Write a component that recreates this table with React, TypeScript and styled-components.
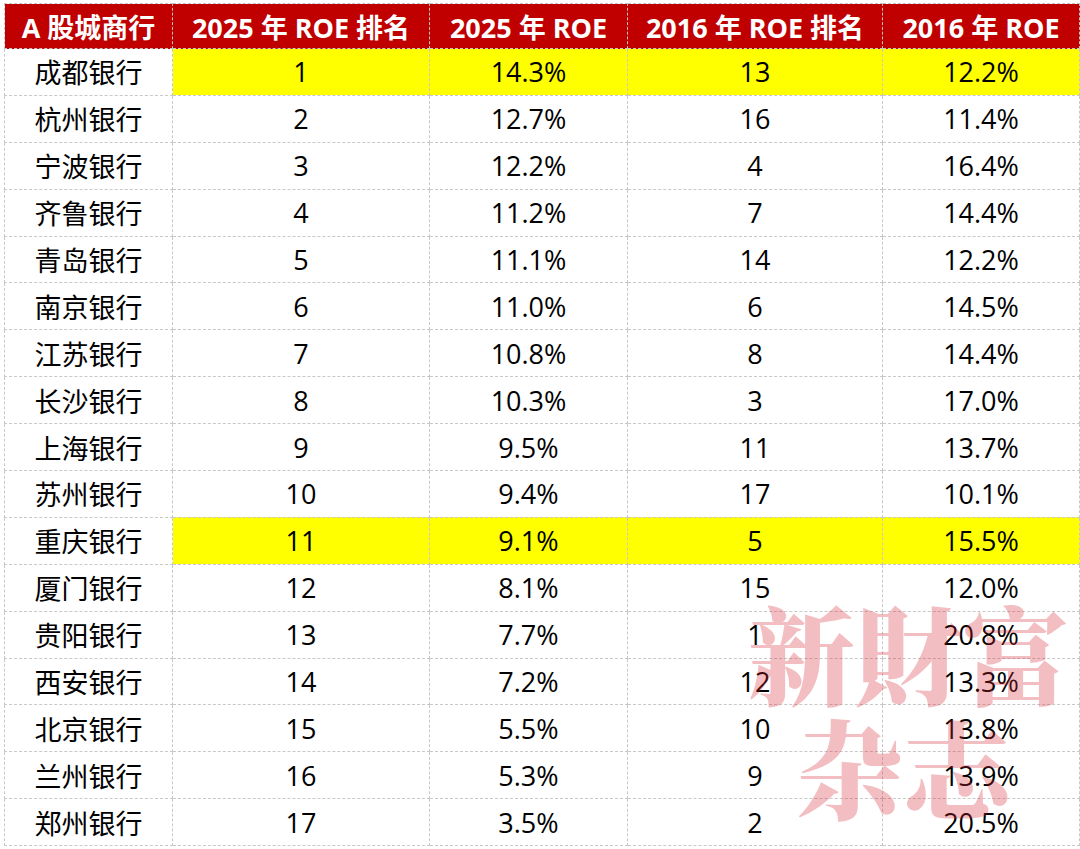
import React from "react";
import styled, { createGlobalStyle } from "styled-components";

const Global = createGlobalStyle`
  html, body { margin: 0; padding: 0; background: #ffffff; }
  body { font-family: "Open Sans", "Noto Sans CJK SC", sans-serif; }
`;

const Page = styled.div`
  position: relative;
  width: 1080px;
  height: 849px;
  padding: 3px 0 0 4px;
  box-sizing: border-box;
  overflow: hidden;
`;

const Table = styled.table`
  border-collapse: collapse;
  table-layout: fixed;
  width: 1075px;
  font-family: "Open Sans", "Noto Sans CJK SC", sans-serif;
`;

const HeadCell = styled.th<{ $w: number }>`
  width: ${(p) => p.$w}px;
  height: 44px;
  padding: 0;
  background: #c00000;
  color: #ffffff;
  font-size: 27px;
  font-weight: 700;
  text-align: center;
  vertical-align: middle;
  border: 1px dashed #c4c4c4;
  white-space: nowrap;
`;

const Cell = styled.td<{ $hl?: boolean }>`
  height: 45.9px;
  padding: 0;
  background: ${(p) => (p.$hl ? "#ffff00" : "#ffffff")};
  color: #000000;
  font-size: 27px;
  font-weight: 400;
  text-align: center;
  vertical-align: middle;
  border: 1px dashed #c8c8c8;
  white-space: nowrap;
`;

const Watermark = styled.div`
  position: absolute;
  left: 748px;
  top: 594px;
  width: 320px;
  font-family: "Noto Serif CJK SC", "Noto Sans CJK SC", serif;
  font-weight: 900;
  font-size: 107px;
  line-height: 114px;
  color: rgba(214, 40, 52, 0.3);
  text-align: center;
  pointer-events: none;
`;

const WmLine = styled.div<{ $shift?: number }>`
  white-space: nowrap;
  margin-left: ${(p) => p.$shift ?? 0}px;
`;

const headers: [string, number][] = [
  ["A 股城商行", 167],
  ["2025 年 ROE 排名", 256],
  ["2025 年 ROE", 197],
  ["2016 年 ROE 排名", 254],
  ["2016 年 ROE", 196],
];

const rows: [string, number, string, number, string][] = [
  ["成都银行", 1, "14.3%", 13, "12.2%"],
  ["杭州银行", 2, "12.7%", 16, "11.4%"],
  ["宁波银行", 3, "12.2%", 4, "16.4%"],
  ["齐鲁银行", 4, "11.2%", 7, "14.4%"],
  ["青岛银行", 5, "11.1%", 14, "12.2%"],
  ["南京银行", 6, "11.0%", 6, "14.5%"],
  ["江苏银行", 7, "10.8%", 8, "14.4%"],
  ["长沙银行", 8, "10.3%", 3, "17.0%"],
  ["上海银行", 9, "9.5%", 11, "13.7%"],
  ["苏州银行", 10, "9.4%", 17, "10.1%"],
  ["重庆银行", 11, "9.1%", 5, "15.5%"],
  ["厦门银行", 12, "8.1%", 15, "12.0%"],
  ["贵阳银行", 13, "7.7%", 1, "20.8%"],
  ["西安银行", 14, "7.2%", 12, "13.3%"],
  ["北京银行", 15, "5.5%", 10, "13.8%"],
  ["兰州银行", 16, "5.3%", 9, "13.9%"],
  ["郑州银行", 17, "3.5%", 2, "20.5%"],
];

const highlighted = new Set(["成都银行", "重庆银行"]);

export default function App() {
  return (
    <Page>
      <Global />
      <Table>
        <thead>
          <tr>
            {headers.map(([h, w]) => (
              <HeadCell key={h} $w={w}>
                {h}
              </HeadCell>
            ))}
          </tr>
        </thead>
        <tbody>
          {rows.map((r) => {
            const hl = highlighted.has(r[0]);
            return (
              <tr key={r[0]}>
                <Cell>{r[0]}</Cell>
                <Cell $hl={hl}>{r[1]}</Cell>
                <Cell $hl={hl}>{r[2]}</Cell>
                <Cell $hl={hl}>{r[3]}</Cell>
                <Cell $hl={hl}>{r[4]}</Cell>
              </tr>
            );
          })}
        </tbody>
      </Table>
      <Watermark>
        <WmLine>新財富</WmLine>
        <WmLine $shift={-10}>杂志</WmLine>
      </Watermark>
    </Page>
  );
}
